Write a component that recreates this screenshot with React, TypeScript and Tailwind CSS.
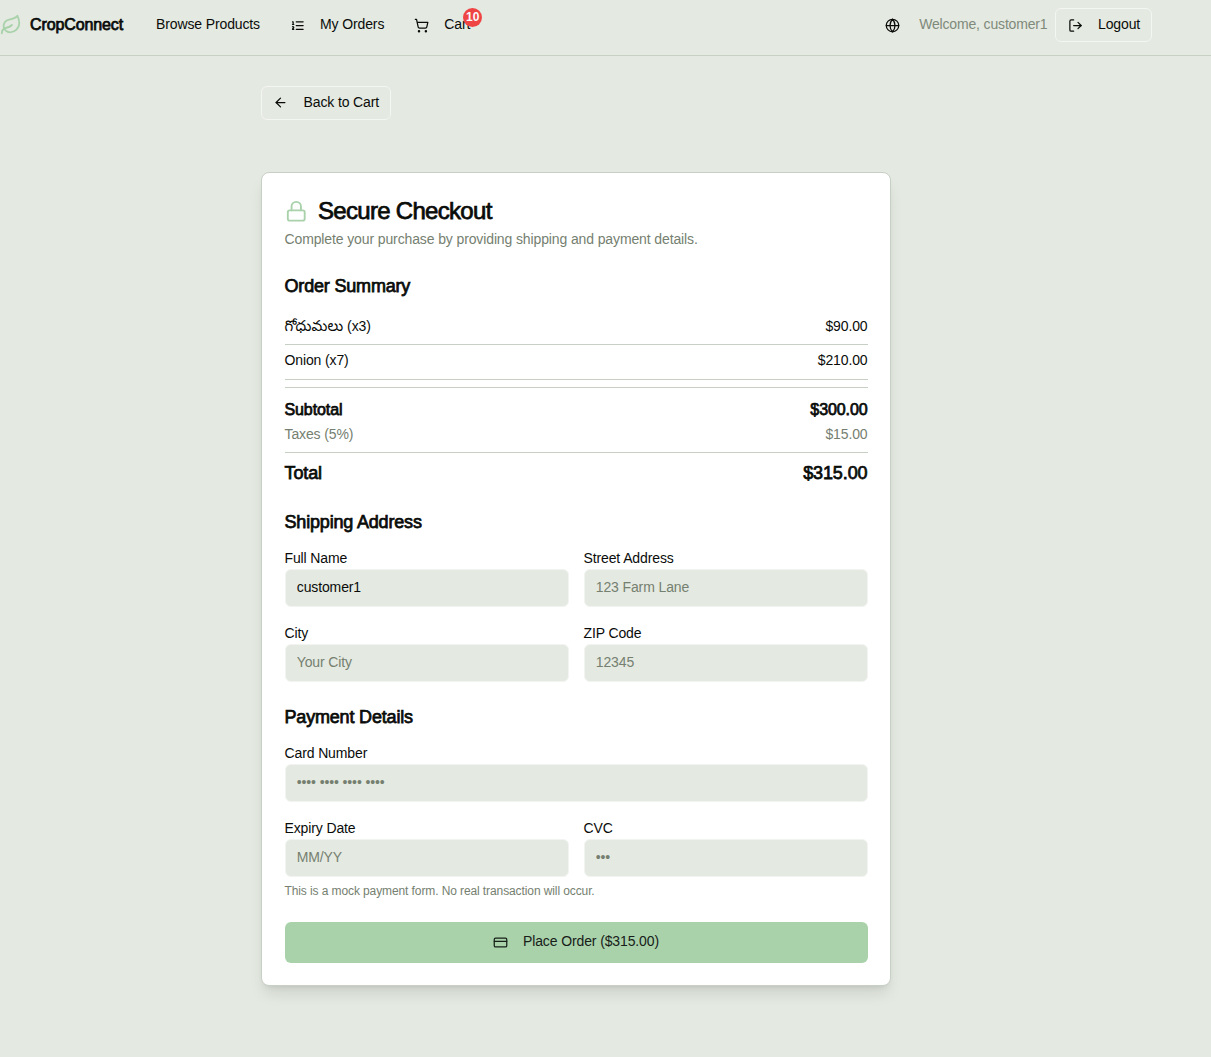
import type { ReactNode } from "react";
import { ArrowLeft, CreditCard, Globe, Leaf, Lock, LogOut, ShoppingCart } from "lucide-react";

const semi = "[-webkit-text-stroke:0.75px_#0a0c0a]";

function OrdersIcon() {
  return (
    <svg
      viewBox="0 0 24 24"
      className="mr-[15px] size-[15px] translate-y-px"
      fill="none"
      stroke="currentColor"
      strokeWidth="2"
      strokeLinecap="round"
      strokeLinejoin="round"
    >
      <path d="M10 6h11M10 12h11M10 18h11M4 6h1v4M4 10h2M6 18H4c0-1 2-2 2-3s-1-1.5-2-1" />
    </svg>
  );
}

function Heading({ children }: { children: ReactNode }) {
  return (
    <h3 className={`h-[26px] text-[18px] leading-[26px] tracking-[-0.18px] ${semi}`}>{children}</h3>
  );
}

function Field({ label, value, placeholder }: { label: string; value?: string; placeholder?: string }) {
  return (
    <label className="block min-w-0">
      <span className="block h-[22px] leading-[22px]">{label}</span>
      <input
        className="block h-[37.5px] w-full rounded-[6px] border border-[#f1f4f0] bg-[#e4e9e1] px-[11.25px] pb-[2px] outline-none placeholder:text-[#758070]"
        defaultValue={value}
        placeholder={placeholder}
      />
    </label>
  );
}

export default function App() {
  return (
    <div className="min-h-[1057px] bg-[#e4e9e1] font-['Liberation_Sans','Noto_Sans_Telugu',sans-serif] text-[14px] tracking-[-0.12px] text-[#0a0c0a]">
      <header className="h-[56px] border-b border-[#c8d0c6]">
        <div className="flex h-[49px] w-[1152px] items-center">
          <a className="flex items-center">
            <Leaf className="size-[22px] text-[#a9d2ab]" />
            <span className={`ml-[8px] text-[16px] tracking-[-0.12px] ${semi}`}>CropConnect</span>
          </a>
          <nav className="ml-[33px] flex items-center">
            <a>Browse Products</a>
            <a className="ml-[30px] flex items-center">
              <OrdersIcon />
              My Orders
            </a>
            <a className="relative ml-[30px] flex items-center">
              <ShoppingCart className="mr-[15px] size-[15px] translate-y-px" />
              Cart
              <span className="absolute -right-[12px] -top-[6px] flex size-[19px] items-center justify-center rounded-full bg-[#ef4444] pb-px text-[12px] font-bold tracking-[0.1px] text-[#fafafa]">
                10
              </span>
            </a>
          </nav>
          <div className="ml-auto flex items-center">
            <Globe className="mr-[19px] size-[15px] translate-y-px" />
            <span className="mr-[7.5px] tracking-[-0.16px] text-[#7f8a7b]">Welcome, customer1</span>
            <button className="flex h-[34px] w-[97px] items-center rounded-[6px] border border-[#f4f6f3] pl-[12px]">
              <LogOut className="mr-[15px] size-[15px] translate-y-px" />
              Logout
            </button>
          </div>
        </div>
      </header>

      <main className="ml-[261px] w-[630px] pt-[30px]">
        <button className="flex h-[34px] w-[130px] items-center rounded-[6px] border border-[#f4f6f3] pb-[2px] pl-[11px]">
          <ArrowLeft className="mr-[15.5px] size-[15px]" />
          Back to Cart
        </button>

        <section className="mt-[52px] h-[814px] rounded-[8px] border border-[#c8d0c6] bg-white px-[22.5px] pt-[22px] shadow-lg">
          <h2 className={`flex h-[32px] items-center text-[24px] tracking-[-0.7px] ${semi}`}>
            <Lock className="mr-[11px] size-[22.5px] text-[#a9d2ab]" strokeWidth={2} />
            Secure Checkout
          </h2>
          <p className="h-[23px] leading-[24px] text-[#758070]">
            Complete your purchase by providing shipping and payment details.
          </p>

          <div className="mt-[23px]">
            <Heading>Order Summary</Heading>
            <div className="mt-[10px] flex h-[36px] items-center justify-between border-b border-[#c8d0c6]">
              <span>
                <span className="text-[15px] leading-none tracking-[0.1px]">గోధుమలు</span> (x3)
              </span>
              <span>$90.00</span>
            </div>
            <div className="flex h-[35px] items-center justify-between border-b border-[#c8d0c6] pb-[3px]">
              <span>Onion (x7)</span>
              <span>$210.00</span>
            </div>
            <div className="mt-[7px] border-t border-[#c8d0c6] pt-[10px]">
              <div className={`flex h-[24px] items-center justify-between text-[16px] tracking-[-0.1px] ${semi}`}>
                <span>Subtotal</span>
                <span>$300.00</span>
              </div>
              <div className="flex h-[24px] items-center justify-between text-[#758070]">
                <span>Taxes (5%)</span>
                <span>$15.00</span>
              </div>
            </div>
            <div className={`mt-[6px] flex h-[41px] items-center justify-between border-t border-[#c8d0c6] text-[18px] tracking-[-0.1px] ${semi}`}>
              <span>Total</span>
              <span>$315.00</span>
            </div>
          </div>

          <div className="mt-[16px]">
            <Heading>Shipping Address</Heading>
            <div className="mt-[12px] grid grid-cols-2 gap-x-[15px] gap-y-[15.5px]">
              <Field label="Full Name" value="customer1" />
              <Field label="Street Address" placeholder="123 Farm Lane" />
              <Field label="City" placeholder="Your City" />
              <Field label="ZIP Code" placeholder="12345" />
            </div>
          </div>

          <div className="mt-[22.5px]">
            <Heading>Payment Details</Heading>
            <div className="mt-[12px] grid gap-y-[15.5px]">
              <Field label="Card Number" placeholder="•••• •••• •••• ••••" />
              <div className="grid grid-cols-2 gap-x-[15px]">
                <Field label="Expiry Date" placeholder="MM/YY" />
                <Field label="CVC" placeholder="•••" />
              </div>
            </div>
            <p className="mt-[7px] h-[15px] text-[12px] leading-[15px] tracking-[-0.1px] text-[#758070]">
              This is a mock payment form. No real transaction will occur.
            </p>
          </div>

          <button className="mt-[23.5px] flex h-[41px] w-full items-center justify-center rounded-[6px] bg-[#a9d2ab] pb-[2px] text-[#172018]">
            <CreditCard className="mr-[15px] size-[15px] translate-y-px" />
            Place Order ($315.00)
          </button>
        </section>
      </main>
    </div>
  );
}
